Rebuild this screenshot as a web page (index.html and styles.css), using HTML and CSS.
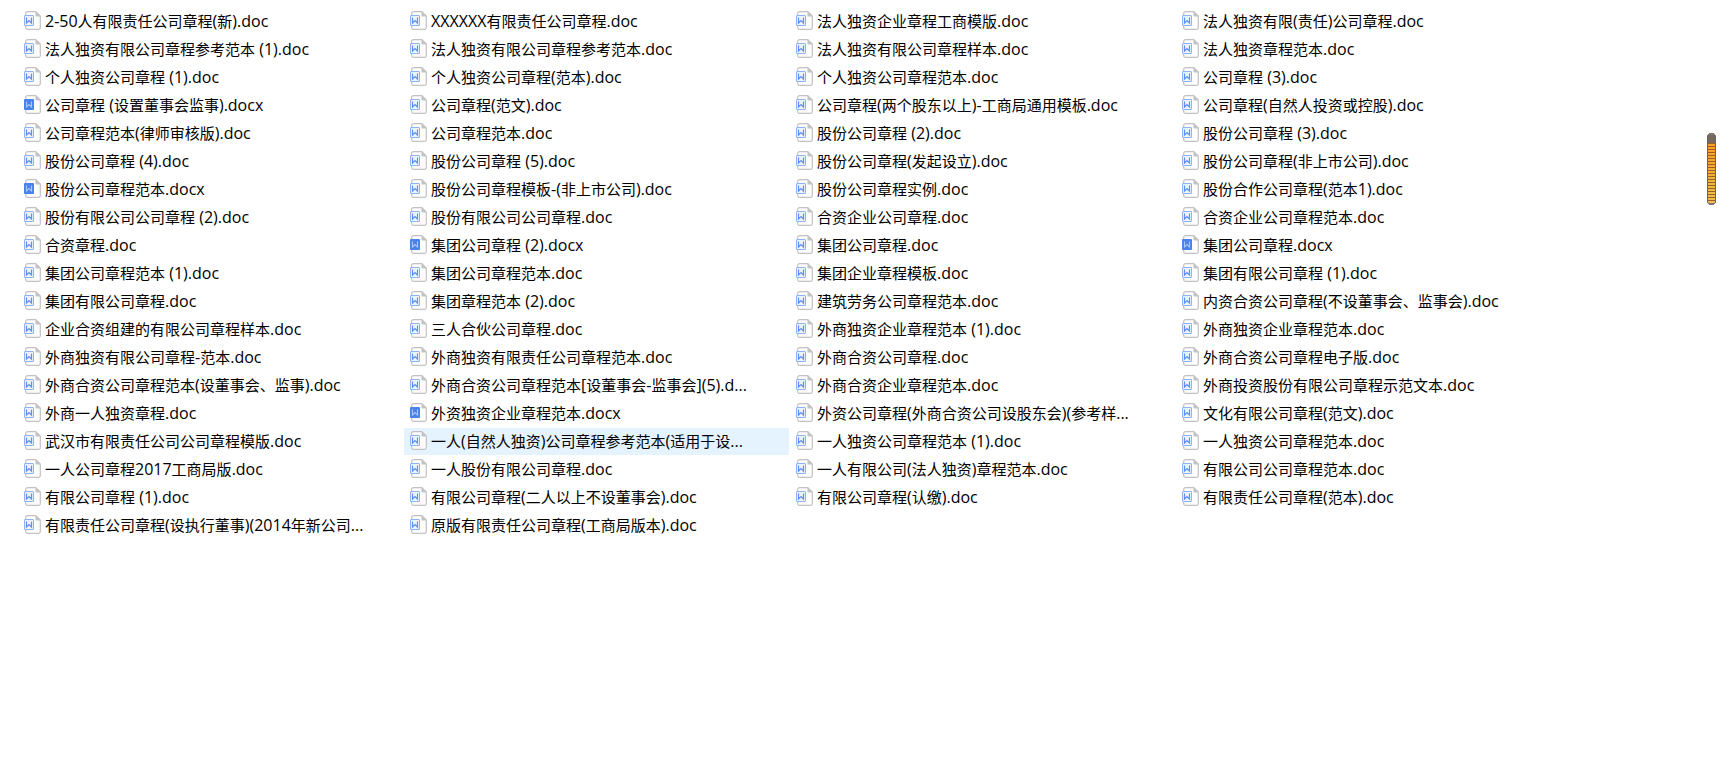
FILE: index.html
```html
<!DOCTYPE html>
<html lang="zh-CN">
<head>
<meta charset="utf-8">
<title>公司章程</title>
<link rel="stylesheet" href="styles.css">
</head>
<body>
<svg class="sprites" aria-hidden="true">
  <symbol id="doc" viewBox="0 0 17 19">
    <path d="M3.500.6h8.300l4.500 4.500v11.500a1.800 1.800 0 0 1-1.800 1.800H3.500a1.800 1.800 0 0 1-1.800-1.800V2.400A1.800 1.800 0 0 1 3.500.6z" fill="#fdfdfe" stroke="#c3c1c4" stroke-width="1.200"/>
    <path d="M11.500.5v3.700q0 1.300 1.300 1.300h3.700z" fill="#c3c1c4"/>
    <rect x=".5" y="4.500" width="9" height="10" rx=".5" fill="#eef4ff" stroke="#8fb2f3"/>
    <path d="M2.500 6.500v5.500l2.500-2.500 2.500 2.500v-5.500" fill="none" stroke="#5f8fee" stroke-width="1.200"/>
  </symbol>
  <symbol id="docx" viewBox="0 0 17 19">
    <path d="M3.500.6h8.300l4.500 4.500v11.500a1.800 1.800 0 0 1-1.800 1.800H3.500a1.800 1.800 0 0 1-1.800-1.800V2.400A1.800 1.800 0 0 1 3.500.6z" fill="#fdfdfe" stroke="#c3c1c4" stroke-width="1.200"/>
    <path d="M11.500.5v3.700q0 1.300 1.300 1.300h3.700z" fill="#c3c1c4"/>
    <rect x="0" y="4" width="10" height="11" rx=".8" fill="#4a83ee"/>
    <path d="M2.500 6.500v5.500l2.500-2.500 2.500 2.500v-5.500" fill="none" stroke="#a9c5fa" stroke-width="1.100"/>
  </symbol>
</svg>
<main>
  <ul class="files" id="files"></ul>
</main>
<div class="meter" aria-hidden="true"></div>
<script src="files.js"></script>
</body>
</html>
```
FILE: styles.css
```css
body {
  margin: 0;
  background: #fff;
  color: #000;
  font-family: "Open Sans", "Noto Sans", "Noto Sans CJK SC", sans-serif;
  font-size: 16px;
}

.sprites {
  display: none;
}

.files {
  display: grid;
  grid-template-columns: repeat(auto-fill, 385px);
  gap: 1px;
  margin: 0;
  padding: 8px 0 8px 18px;
  list-style: none;
}

.file {
  display: flex;
  align-items: center;
  gap: 4px;
  padding: 0 6px 2px;
}

.file.hover {
  background: #e5f3ff;
}

.icon {
  flex: none;
  width: 17px;
  height: 19px;
}

.name {
  height: 25px;
  line-height: 25px;
  white-space: pre;
}

.han {
  font-family: "Noto Sans CJK SC", sans-serif;
  font-size: 15px;
}

.meter {
  position: fixed;
  top: 134px;
  right: 4px;
  box-sizing: border-box;
  width: 9px;
  height: 70px;
  border: 1px solid #6b6462;
  border-radius: 2px;
  background:
    linear-gradient(#75695f 8px, transparent 8px),
    repeating-linear-gradient(transparent 0 2px, #9c5f28 2px 3px),
    linear-gradient(#f79a1e, #f3bc55);
}

.meter::before,
.meter::after {
  content: "";
  position: absolute;
  left: 1px;
  width: 5px;
  height: 2px;
  background: #7b7573;
}

.meter::before {
  top: -2px;
}

.meter::after {
  bottom: -2px;
}
```
FILE: files.js
```js
const files = `2-50人有限责任公司章程(新).doc
XXXXXX有限责任公司章程.doc
法人独资企业章程工商模版.doc
法人独资有限(责任)公司章程.doc
法人独资有限公司章程参考范本 (1).doc
法人独资有限公司章程参考范本.doc
法人独资有限公司章程样本.doc
法人独资章程范本.doc
个人独资公司章程 (1).doc
个人独资公司章程(范本).doc
个人独资公司章程范本.doc
公司章程 (3).doc
公司章程 (设置董事会监事).docx
公司章程(范文).doc
公司章程(两个股东以上)-工商局通用模板.doc
公司章程(自然人投资或控股).doc
公司章程范本(律师审核版).doc
公司章程范本.doc
股份公司章程 (2).doc
股份公司章程 (3).doc
股份公司章程 (4).doc
股份公司章程 (5).doc
股份公司章程(发起设立).doc
股份公司章程(非上市公司).doc
股份公司章程范本.docx
股份公司章程模板-(非上市公司).doc
股份公司章程实例.doc
股份合作公司章程(范本1).doc
股份有限公司公司章程 (2).doc
股份有限公司公司章程.doc
合资企业公司章程.doc
合资企业公司章程范本.doc
合资章程.doc
集团公司章程 (2).docx
集团公司章程.doc
集团公司章程.docx
集团公司章程范本 (1).doc
集团公司章程范本.doc
集团企业章程模板.doc
集团有限公司章程 (1).doc
集团有限公司章程.doc
集团章程范本 (2).doc
建筑劳务公司章程范本.doc
内资合资公司章程(不设董事会、监事会).doc
企业合资组建的有限公司章程样本.doc
三人合伙公司章程.doc
外商独资企业章程范本 (1).doc
外商独资企业章程范本.doc
外商独资有限公司章程-范本.doc
外商独资有限责任公司章程范本.doc
外商合资公司章程.doc
外商合资公司章程电子版.doc
外商合资公司章程范本(设董事会、监事).doc
外商合资公司章程范本[设董事会-监事会](5).d...
外商合资企业章程范本.doc
外商投资股份有限公司章程示范文本.doc
外商一人独资章程.doc
外资独资企业章程范本.docx
外资公司章程(外商合资公司设股东会)(参考样...
文化有限公司章程(范文).doc
武汉市有限责任公司公司章程模版.doc
一人(自然人独资)公司章程参考范本(适用于设...
一人独资公司章程范本 (1).doc
一人独资公司章程范本.doc
一人公司章程2017工商局版.doc
一人股份有限公司章程.doc
一人有限公司(法人独资)章程范本.doc
有限公司公司章程范本.doc
有限公司章程 (1).doc
有限公司章程(二人以上不设董事会).doc
有限公司章程(认缴).doc
有限责任公司章程(范本).doc
有限责任公司章程(设执行董事)(2014年新公司...
原版有限责任公司章程(工商局版本).doc`.split("\n");

const hovered = 61;

document.getElementById("files").innerHTML = files.map((name, i) => {
  const icon = name.endsWith(".docx") ? "docx" : "doc";
  const label = name.replace(/[\u3000-\u9fff]+/g, '<span class="han">$&</span>');
  return `<li class="file${i === hovered ? " hover" : ""}">` +
    `<svg class="icon" aria-hidden="true"><use href="#${icon}"/></svg>` +
    `<span class="name">${label}</span></li>`;
}).join("");
```
